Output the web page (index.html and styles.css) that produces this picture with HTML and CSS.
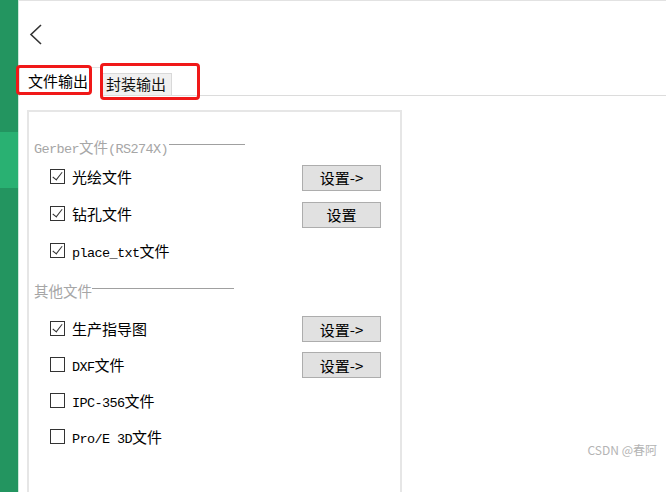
FILE: index.html
```html
<!DOCTYPE html>
<html lang="zh-CN">
<head>
  <meta charset="UTF-8" />
  <title>文件输出</title>
  <link rel="stylesheet" href="styles.css">
</head>
<body>
  <div class="app">
    <aside class="sidebar">
      <div class="side_active"></div>
    </aside>

    <main class="main">
      <div class="header">
        <svg class="back_icon" width="16" height="24" viewBox="0 0 16 24">
          <polyline points="13,2 3,11.5 13,21" fill="none" stroke="#333" stroke-width="1.6" />
        </svg>
      </div>

      <nav class="tabs">
        <div class="tab tab_active">文件输出</div>
        <div class="tab">封装输出</div>
      </nav>

      <section class="panel">
        <!-- Gerber group -->
        <div class="group_title">
          <span class="title_text"><span class="mono">Gerber</span>文件<span class="mono">(RS274X)</span></span>
          <span class="group_line line_short"></span>
        </div>
        <div class="opt_row">
          <label class="opt"><span class="check on"></span><span class="opt_text">光绘文件</span></label>
          <button class="set_btn">设置-&gt;</button>
        </div>
        <div class="opt_row">
          <label class="opt"><span class="check on"></span><span class="opt_text">钻孔文件</span></label>
          <button class="set_btn">设置</button>
        </div>
        <div class="opt_row">
          <label class="opt"><span class="check on"></span><span class="opt_text"><span class="mono">place_txt</span>文件</span></label>
        </div>

        <!-- other files -->
        <div class="group_title group_two">
          <span class="title_text">其他文件</span>
          <span class="group_line line_long"></span>
        </div>
        <div class="opt_row row_small">
          <label class="opt"><span class="check on"></span><span class="opt_text">生产指导图</span></label>
          <button class="set_btn">设置-&gt;</button>
        </div>
        <div class="opt_row row_small">
          <label class="opt"><span class="check"></span><span class="opt_text"><span class="mono">DXF</span>文件</span></label>
          <button class="set_btn">设置-&gt;</button>
        </div>
        <div class="opt_row row_small">
          <label class="opt"><span class="check"></span><span class="opt_text"><span class="mono">IPC-356</span>文件</span></label>
        </div>
        <div class="opt_row row_small">
          <label class="opt"><span class="check"></span><span class="opt_text"><span class="mono">Pro/E 3D</span>文件</span></label>
        </div>
      </section>
    </main>
  </div>

  <!-- red annotation boxes -->
  <div class="mark mark_one"></div>
  <div class="mark mark_two"></div>

  <div class="watermark">CSDN @春阿</div>
</body>
</html>
```

FILE: styles.css
```css
body {
  margin: 0;
  width: 666px;
  height: 492px;
  overflow: hidden;
  background: #fff;
  font-family: "Noto Sans CJK SC", sans-serif;
  color: #111;
}

.app {
  display: flex;
  height: 492px;
}

.sidebar {
  width: 18px;
  flex-shrink: 0;
  background-color: #239560;
  border-right: 1px solid #cde8da;
  padding-top: 132px;
  box-sizing: content-box;
}

.side_active {
  height: 56px;
  background-color: #29b172;
}

.main {
  flex: 1;
  border-top: 1px solid #e2e2e2;
}

.header {
  height: 66px;
  padding-left: 9px;
  box-sizing: border-box;
  padding-top: 22px;
}

.back_icon {
  display: block;
}

.tabs {
  display: flex;
  align-items: flex-end;
  height: 28px;
  border-bottom: 1px solid #dcdcdc;
}

.tab {
  font-size: 15px;
  line-height: 20px;
  height: 21px;
  padding: 0 5px 0 4px;
  background: #f0f0f0;
  border: 1px solid #d9d9d9;
  border-bottom: none;
}

.tab_active {
  background: #fff;
  width: 72px;
  height: 28px;
  line-height: 26px;
  padding: 0 0 0 8px;
  margin-bottom: -1px;
  border-color: #e2e2e2;
  color: #000;
}

.panel {
  margin: 14px 0 0 8px;
  width: 366px;
  height: 356px;
  border: 2px solid #e6e6e6;
  border-bottom: none;
  padding: 24px 0 0 5px;
  box-sizing: content-box;
}

.mono {
  font-family: "Liberation Mono", monospace;
  font-size: 13.5px;
  letter-spacing: -0.6px;
}

.group_title {
  display: flex;
  align-items: center;
  height: 20px;
  font-size: 14.5px;
  color: #a6a6a6;
  margin-bottom: 2px;
}

.title_text {
  white-space: nowrap;
}

.group_two {
  margin-top: 11px;
  margin-bottom: 10px;
}

.group_line {
  height: 1px;
  background: #a0a0a0;
  margin-top: -3px;
}

.line_short {
  width: 76px;
  margin-left: 1px;
}

.line_long {
  width: 142px;
}

.opt_row {
  display: flex;
  align-items: center;
  height: 37px;
  padding-left: 16px;
}

.row_small {
  height: 36px;
}

.opt {
  display: flex;
  align-items: center;
  width: 252px;
  font-size: 15px;
  color: #000;
}

.opt_text {
  white-space: nowrap;
}

.check {
  width: 13px;
  height: 13px;
  border: 1px solid #333;
  margin-right: 7px;
  position: relative;
  flex-shrink: 0;
}

.check.on::after {
  content: "";
  position: absolute;
  left: 4px;
  top: 0px;
  width: 4px;
  height: 9px;
  border-right: 1.5px solid #333;
  border-bottom: 1.5px solid #333;
  transform: rotate(38deg);
}

.set_btn {
  width: 79px;
  height: 26px;
  margin-top: 2px;
  background: #e1e1e1;
  border: 1px solid #adadad;
  font-family: "Noto Sans CJK SC", sans-serif;
  font-size: 15px;
  color: #000;
  padding: 0;
}

.mark {
  position: absolute;
  border: 3.5px solid #f01818;
  border-radius: 4px;
  box-sizing: border-box;
}

.mark_one {
  left: 16px;
  top: 65px;
  width: 76px;
  height: 30px;
}

.mark_two {
  left: 100px;
  top: 63px;
  width: 100px;
  height: 37px;
}

.watermark {
  position: absolute;
  right: 9px;
  bottom: 34px;
  font-size: 12px;
  color: #b4b4b4;
}
```
